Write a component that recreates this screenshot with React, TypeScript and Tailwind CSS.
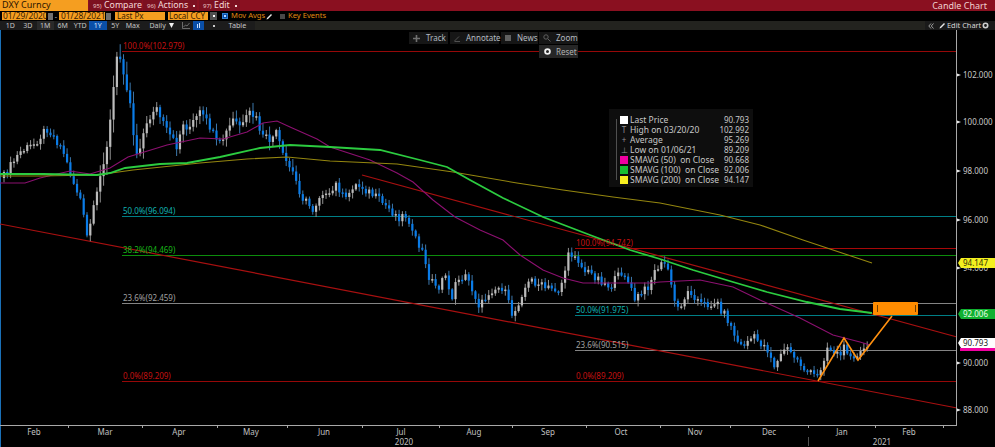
import React from "react";

type P = [number, number];
const closes: P[] = [[3,178],[10,167],[20,152],[33,145],[47,128],[55,138],[63,150],[68,167],[75,187],[80,197],[87,237],[92,217],[98,190],[102,167],[108,140],[112,107],[115,70],[118,53],[122,63],[125,77],[132,113],[135,153],[138,153],[142,137],[148,123],[155,105],[160,117],[166,130],[177,147],[182,125],[190,127],[200,113],[210,127],[218,147],[227,132],[233,120],[242,127],[250,113],[257,120],[262,137],[270,140],[277,133],[283,157],[293,173],[302,197],[313,210],[322,190],[328,200],[332,192],[337,183],[345,202],[353,185],[363,187],[375,197],[385,205],[398,217],[408,215],[413,237],[422,250],[427,273],[438,290],[443,273],[452,297],[458,277],[467,277],[480,307],[490,290],[503,287],[513,317],[523,290],[532,280],[545,288],[560,290],[568,257],[575,253],[583,270],[597,277],[610,287],[623,270],[635,300],[647,288],[657,267],[667,263],[673,297],[678,308],[690,290],[702,305],[717,303],[727,318],[740,347],[753,337],[767,348],[775,367],[785,347],[793,355],[807,372],[818,377],[827,347],[840,355],[845,347],[857,358],[870,343]];

const interp = (pts: P[], x: number) => {
  for (let i = 1; i < pts.length; i++) {
    if (x <= pts[i][0]) {
      const [a, b] = pts[i - 1];
      const [c, d] = pts[i];
      return b + ((d - b) * (x - a)) / (c - a);
    }
  }
  return pts[pts.length - 1][1];
};
const rnd = (i: number) => {
  const s = Math.sin(i * 12.9898) * 43758.5453;
  return s - Math.floor(s);
};

const candles = (() => {
  const out: { x: number; o: number; c: number; h: number; l: number }[] = [];
  let prev = 178;
  for (let i = 0; i < 261; i++) {
    const x = 4 + i * 3.32;
    const spike = x > 100 && x < 145 ? 2.4 : x > 145 && x < 300 ? 1.5 : 1;
    const c = interp(closes, x) + (rnd(i) - 0.5) * 9;
    const o = prev;
    const h = Math.min(o, c) - 1 - rnd(i + 300) * 5 * spike;
    const l = Math.max(o, c) + 1 + rnd(i + 600) * 5 * spike;
    out.push({ x, o, c, h, l });
    prev = c;
  }
  return out;
})();

const ma50 = "0,183 25,183 40,178 70,171 90,174 110,168 128,157 167,145 200,138 223,139 247,132 263,123 277,121 290,127 317,139 330,147 370,160 397,173 413,182 433,200 455,217 480,230 503,240 520,255 543,270 563,278 583,283 613,283 650,283 660,282 700,280 733,287 760,300 800,318 833,335 860,342 870,345";
const ma100 = "0,174 43,174 97,175 110,173 125,168 160,164 187,163 220,157 260,148 290,145 330,147 380,150 420,160 447,167 470,180 503,198 543,217 590,235 630,250 660,259 693,270 733,282 767,292 807,302 840,309 872,313";
const ma200 = "0,176 40,176 97,175 133,170 200,163 247,159 287,157 330,161 397,164 453,172 517,183 563,190 613,197 660,203 720,215 760,225 803,240 872,263";

const fibs = [
  { y: 51, x: 122, c: "#960808", t: "#c41010", l: "100.0%(102.979)" },
  { y: 216, x: 122, c: "#007f86", t: "#10b0b0", l: "50.0%(96.094)" },
  { y: 255, x: 122, c: "#0c8c0c", t: "#18b818", l: "38.2%(94.469)" },
  { y: 303, x: 122, c: "#848484", t: "#a0a0a0", l: "23.6%(92.459)" },
  { y: 381, x: 122, c: "#960808", t: "#c41010", l: "0.0%(89.209)" },
  { y: 248, x: 575, c: "#a80808", t: "#c41010", l: "100.0%(94.742)" },
  { y: 315, x: 575, c: "#007f86", t: "#10b0b0", l: "50.0%(91.975)" },
  { y: 350, x: 575, c: "#848484", t: "#a0a0a0", l: "23.6%(90.515)" },
  { y: 381, x: 575, c: "#960808", t: "#c41010", l: "0.0%(89.209)" },
];

const yLabels: [number, string][] = [[75, "102.000"], [122, "100.000"], [171, "98.000"], [220, "96.000"], [268, "94.000"], [363, "90.000"], [410, "88.000"]];
const months: [number, string][] = [[34, "Feb"], [105, "Mar"], [179, "Apr"], [251, "May"], [324, "Jun"], [401, "Jul"], [474, "Aug"], [548, "Sep"], [621, "Oct"], [695, "Nov"], [769, "Dec"], [842, "Jan"], [909, "Feb"]];
const ticks = [68, 142, 217, 287, 362, 439, 512, 586, 660, 730, 808, 875, 943];

const legend: { sw?: string; glyph?: string; l: string; v: string }[] = [
  { sw: "bg-white", l: "Last Price", v: "90.793" },
  { glyph: "T", l: "High on 03/20/20", v: "102.992" },
  { glyph: "+", l: "Average", v: "95.269" },
  { glyph: "⊥", l: "Low on 01/06/21", v: "89.209" },
  { sw: "bg-[#f000a0]", l: "SMAVG (50)  on Close", v: "90.668" },
  { sw: "bg-[#18c030]", l: "SMAVG (100)  on Close", v: "92.006" },
  { sw: "bg-[#f8f020]", l: "SMAVG (200)  on Close", v: "94.147" },
];

const RedBtn = ({ n, t, caret, w }: { n: string; t: string; caret?: boolean; w: string }) => (
  <div className={`flex items-center shrink-0 h-[11px] bg-[#7c1020] pl-[4px] text-[#f4d8d8] ${w}`}>
    <span className="w-[8px] mr-[3px] text-[6px] leading-none text-[#e8c0c0] whitespace-nowrap">{n}</span>
    <span className="text-[8.8px] leading-none">{t}</span>
    {caret && <div className="ml-[5px] w-[2px] h-[2px] bg-[#f4d8d8]" />}
  </div>
);

const Range = ({ t, active, tint }: { t: string; active?: boolean; tint?: boolean }) => (
  <div className={`flex items-center justify-center shrink-0 h-[9px] w-[17.5px] text-[7px] leading-none ${active ? "bg-[#0a4fa8] text-[#d8e8ff]" : tint ? "bg-[#2a2a2a] text-[#c4c4c4]" : "text-[#c4c4c4]"}`}>{t}</div>
);

const Tag = ({ y, bg, t, fg }: { y: string; bg: string; t: string; fg: string }) => (
  <div className={`absolute left-[958px] w-[37px] h-[10px] flex items-center pl-[5px] text-[8px] leading-none [clip-path:polygon(3px_0,100%_0,100%_100%,3px_100%,0_50%)] ${y} ${bg} ${fg}`}>{t}</div>
);

export default function App() {
  return (
    <div className="relative w-[995px] h-[447px] overflow-hidden bg-black font-['Liberation_Sans',Arial,sans-serif]">
      {/* Title bar */}
      <div className="absolute left-0 top-0 w-full h-[11px] bg-[#8a1020] flex">
        <div className="w-[88px] shrink-0 h-[11px] bg-[#f59e20] text-[#2a1500] text-[9px] leading-[10px] pl-[2px]">DXY Curncy</div>
        <div className="w-[1px] shrink-0" />
        <RedBtn n="95)" t="Compare" w="w-[53px]" />
        <div className="w-[1px] shrink-0" />
        <RedBtn n="96)" t="Actions" caret w="w-[54px]" />
        <div className="w-[2px] shrink-0" />
        <RedBtn n="97)" t="Edit" caret w="w-[41px]" />
        <div className="ml-auto pr-[8px] text-[9px] leading-[11px] text-[#f0d0d0]">Candle Chart</div>
      </div>

      {/* Inputs row */}
      <div className="absolute left-0 top-[11px] w-full h-[10px] flex items-center text-[8px] leading-none">
        <div className="ml-[2px] w-[44px] shrink-0 h-[8px] bg-[#f59e20] text-[#3a2000] text-[8.4px] flex items-center pl-[1px]">01/29/2020</div>
        <div className="ml-[2px] w-[5px] shrink-0 h-[7px] bg-[#707070]" />
        <div className="w-[6px] shrink-0 text-[#c8c8c8] text-center text-[7px]">-</div>
        <div className="w-[46px] shrink-0 h-[8px] bg-[#f59e20] text-[#3a2000] text-[8.4px] flex items-center pl-[2px]">01/28/2021</div>
        <div className="ml-[1px] w-[5px] shrink-0 h-[7px] bg-[#707070]" />
        <div className="ml-[4px] w-[50px] shrink-0 h-[8px] bg-[#f59e20] text-[#3a2000] flex items-center pl-[2px]">Last Px</div>
        <div className="ml-[3px] w-[40px] shrink-0 h-[8px] bg-[#f59e20] text-[#3a2000] flex items-center pl-[1px]">Local CCY</div>
        <div className="ml-[2px] w-[7px] shrink-0 h-[8px] bg-[#505050] flex items-center justify-center"><div className="w-[2px] h-[2px] bg-white" /></div>
        <div className="ml-[5px] w-[6px] shrink-0 h-[6px] border border-[#3080d0] bg-[#0a4fa8] flex items-center justify-center">
          <div className="w-[2px] h-[2px] bg-[#b8d8ff]" />
        </div>
        <div className="ml-[3px] text-[7.6px] text-[#e08a10] whitespace-nowrap w-[33px] shrink-0">Mov Avgs</div>
        <svg width="7" height="7" viewBox="0 0 7 7" className="ml-[2px] shrink-0"><path d="M0.5 6.5 L1 5 L5 1 L6 2 L2 6 Z" fill="#e8e8e8" /></svg>
        <div className="ml-[7px] w-[5px] h-[5px] shrink-0 bg-[#484848]" />
        <div className="ml-[3px] text-[7.6px] text-[#e08a10] whitespace-nowrap">Key Events</div>
      </div>

      {/* Range row */}
      <div className="absolute left-0 top-[21px] w-full h-[9px] bg-[#23231f] flex items-center">
        <div className="w-[255px] flex items-center bg-[#1c1c1c] h-[9px] pl-[1.5px]">
          <Range t="1D" />
          <Range t="3D" />
          <Range t="1M" tint />
          <Range t="6M" />
          <Range t="YTD" />
          <Range t="1Y" active />
          <Range t="5Y" />
          <Range t="Max" />
          <div className="ml-[8px] w-[16px] shrink-0 text-[7px] leading-none text-[#c4c4c4]">Daily</div>
          <svg width="5" height="5" viewBox="0 0 5 5" className="ml-[3px] shrink-0"><path d="M0 0 H5 L2.5 5 Z" fill="#f0f0f0" /></svg>
          <svg width="8" height="7" viewBox="0 0 8 7" className="ml-[8px] shrink-0"><path d="M0.5 0 V6.5 H8 M1.5 5 L3.5 3 L5 4 L7.5 1" stroke="#808080" fill="none" strokeWidth="0.8" /></svg>
          <div className="ml-[3px] w-[11px] shrink-0 h-[9px] bg-[#0a4fa8] flex items-center justify-center gap-px">
            <div className="w-px h-[4px] bg-[#c8e0ff]" />
            <div className="w-px h-[5px] bg-[#c8e0ff]" />
          </div>
          <div className="ml-[9px] w-[2px] h-[2px] shrink-0 bg-[#c8c8c8]" />
          <div className="ml-[14px] text-[7.2px] leading-none text-[#c4c4c4]">Table</div>
        </div>
        <div className="ml-auto w-[70px] h-[9px] bg-[#1a1a1a] flex items-center pl-[3px] text-[7.4px] leading-none text-[#d8d8d8]">
          <svg width="6" height="6" viewBox="0 0 6 6" className="shrink-0"><path d="M3 0.5 L0.8 3 L3 5.5 M5.5 0.5 L3.3 3 L5.5 5.5" fill="none" stroke="#c0c0c0" strokeWidth="0.8" /></svg>
          <svg width="7" height="7" viewBox="0 0 7 7" className="ml-[5px] shrink-0"><path d="M0.5 6.5 L1 5 L5 1 L6 2 L2 6 Z" fill="#e8e8e8" /></svg>
          <span className="ml-[1px] whitespace-nowrap w-[33px] shrink-0">Edit Chart</span>
          <svg width="7" height="7" viewBox="0 0 7 7" className="ml-[2px] shrink-0"><circle cx="3.5" cy="3.5" r="2.2" fill="none" stroke="#d0d0d0" strokeWidth="1.6" /></svg>
        </div>
      </div>

      {/* Chart */}
      <svg className="absolute left-0 top-0" width="995" height="447" viewBox="0 0 995 447">
        <line x1="0.5" y1="30" x2="0.5" y2="447" stroke="#1a70b8" strokeWidth="1" />
        {fibs.map((f) => (
          <line key={f.l + f.x} x1={f.x} y1={f.y + 0.5} x2="957" y2={f.y + 0.5} stroke={f.c} strokeWidth="1" />
        ))}
        <line x1="0" y1="224" x2="957" y2="408" stroke="#a81010" strokeWidth="1.2" />
        <line x1="362" y1="175" x2="957" y2="337" stroke="#a81010" strokeWidth="1.2" />

        {candles.map((k, i) => {
          const up = k.c < k.o;
          const top = Math.min(k.o, k.c);
          const h = Math.max(Math.abs(k.o - k.c), 1.5);
          return (
            <g key={i}>
              <line x1={k.x} x2={k.x} y1={k.h} y2={k.l} stroke={up ? "#909090" : "#3c78ac"} strokeWidth="1" />
              <rect x={k.x - 1.1} y={top} width="2.2" height={h} fill={up ? "#bcbcbc" : "#0a7ce8"} />
            </g>
          );
        })}

        <polyline points={ma50} fill="none" stroke="#8c1070" strokeWidth="1.1" />
        <polyline points={ma200} fill="none" stroke="#94860f" strokeWidth="1.1" />
        <polyline points={ma100} fill="none" stroke="#2ccc40" strokeWidth="1.8" />

        {fibs.map((f) => (
          <text key={f.l + f.x + "t"} x={f.x + 1} y={f.y - 2} fill={f.t} className="text-[8px]">{f.l}</text>
        ))}

        {/* Orange drawing */}
        <polyline points="818,381 844,338 858,360 892,316" fill="none" stroke="#ff9010" strokeWidth="1.6" />
        <rect x="873" y="302" width="45" height="13" rx="1" fill="#ff8c00" />
        <line x1="877.5" y1="305" x2="877.5" y2="312" stroke="#704000" />
        <line x1="915.5" y1="305" x2="915.5" y2="312" stroke="#704000" />

        {/* Axes */}
        <line x1="956.5" y1="30" x2="956.5" y2="425" stroke="#a8a8a8" strokeWidth="1" />
        <line x1="0" y1="425.5" x2="957" y2="425.5" stroke="#a8a8a8" strokeWidth="1" />
        {ticks.map((t) => (
          <line key={t} x1={t + 0.5} x2={t + 0.5} y1="425" y2="428" stroke="#a8a8a8" />
        ))}
        <line x1="808.5" y1="437" x2="808.5" y2="446" stroke="#505050" />
        {yLabels.map(([y, t]) => (
          <g key={t}>
            <path d={`M957 ${y - 1.5} L961 ${y} L957 ${y + 1.5} Z`} fill="#e8e8e8" />
            <text x="963" y={y + 3} fill="#c8c8c8" className="text-[8px]">{t}</text>
          </g>
        ))}
        {months.map(([x, t], i) => (
          <text key={t + i} x={x} y="434.5" textAnchor="middle" fill="#c0c0c0" className="text-[8px]">{t}</text>
        ))}
        <text x="404" y="445" textAnchor="middle" fill="#c0c0c0" className="text-[8px]">2020</text>
        <text x="882" y="445" textAnchor="middle" fill="#c0c0c0" className="text-[8px]">2021</text>
      </svg>

      {/* Price tags */}
      <Tag y="top-[258px]" bg="bg-[#f4f020]" fg="text-[#303000]" t="94.147" />
      <Tag y="top-[309px]" bg="bg-[#10b030]" fg="text-[#e8ffe8]" t="92.006" />
      <div className="absolute left-[960px] top-[348px] w-[35px] h-[3px] bg-[#f000a0]" />
      <Tag y="top-[338px]" bg="bg-white" fg="text-[#202020]" t="90.793" />

      {/* Floating tools */}
      <div className="absolute left-[409px] top-[32px] flex h-[12px] text-[8px] leading-none text-[#b4bac0]">
        <div className="w-[39px] shrink-0 bg-[#161616] flex items-center pl-[4px] gap-[6px]">
          <svg width="7" height="7" viewBox="0 0 7 7" className="shrink-0"><path d="M3.5 0 V7 M0 3.5 H7" stroke="#707070" strokeWidth="1.6" /></svg>
          <span>Track</span>
        </div>
        <div className="ml-[2px] w-[49px] shrink-0 bg-[#161616] flex items-center pl-[4px] gap-[5px]">
          <svg width="7" height="7" viewBox="0 0 7 7" className="shrink-0"><path d="M0.5 6 L5 1.5 M0.5 6.5 H6" stroke="#606060" strokeWidth="0.8" fill="none" /></svg>
          <span>Annotate</span>
        </div>
        <div className="ml-[2px] w-[37px] shrink-0 bg-[#161616] flex items-center pl-[4px] gap-[6px]">
          <div className="w-[6px] h-[6px] shrink-0 bg-[#606060]" />
          <span>News</span>
        </div>
        <div className="ml-[1px] w-[39px] shrink-0 bg-[#161616] flex items-center pl-[4px] gap-[5px]">
          <svg width="8" height="8" viewBox="0 0 8 8" className="shrink-0"><circle cx="3" cy="3" r="2.2" stroke="#606060" fill="none" /><path d="M4.8 4.8 L7.5 7.5" stroke="#606060" /></svg>
          <span>Zoom</span>
        </div>
      </div>
      <div className="absolute left-[539px] top-[45px] w-[39px] h-[13px] bg-[#262626] flex items-center pl-[5px] gap-[5px] text-[8px] leading-none text-[#b0b0b0]">
        <svg width="7" height="7" viewBox="0 0 7 7" className="shrink-0"><circle cx="3.5" cy="3.5" r="2.4" fill="none" stroke="#f0f0f0" strokeWidth="1.8" /></svg>
        <span>Reset</span>
      </div>

      {/* Legend */}
      <div className="absolute left-[609px] top-[109px] w-[144px] h-[78px] bg-[#0e0e0e] pt-[6px] text-[8.5px] leading-[10px] text-[#c8c8c8]">
        <div className="absolute left-[7px] top-[10px] w-px h-[61px] bg-[#505050]" />
        {legend.map((r) => (
          <div key={r.l} className="relative flex items-center h-[10px] pl-[11px] pr-[4px]">
            {r.sw ? (
              <div className={`w-[8px] h-[8px] shrink-0 ${r.sw}`} />
            ) : (
              <div className="w-[8px] shrink-0 text-center text-[8px] leading-none text-[#909090]">{r.glyph}</div>
            )}
            <span className="ml-[2px] whitespace-pre">{r.l}</span>
            <span className="ml-auto text-[8px]">{r.v}</span>
          </div>
        ))}
      </div>
    </div>
  );
}
